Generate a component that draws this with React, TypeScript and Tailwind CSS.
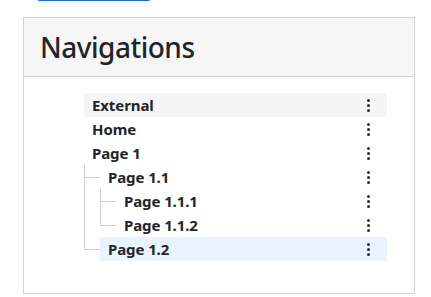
import React from "react";

type Node = { label: string; children?: Node[]; bg?: string };

const tree: Node[] = [
  { label: "External", bg: "bg-[#f5f5f5]" },
  { label: "Home" },
  {
    label: "Page 1",
    children: [
      {
        label: "Page 1.1",
        children: [{ label: "Page 1.1.1" }, { label: "Page 1.1.2" }],
      },
      { label: "Page 1.2", bg: "bg-[#e9f3fd]" },
    ],
  },
];

function Kebab() {
  return (
    <svg width="3" height="13" viewBox="0 0 3 13" className="block">
      <circle cx="1.5" cy="1.5" r="1.5" fill="#2b2b2b" />
      <circle cx="1.5" cy="6.5" r="1.5" fill="#2b2b2b" />
      <circle cx="1.5" cy="11.5" r="1.5" fill="#2b2b2b" />
    </svg>
  );
}

function Row({ node }: { node: Node }) {
  return (
    <div className={`flex h-6 items-center justify-between pl-2 pr-[17px] ${node.bg ?? ""}`}>
      <span className="text-[15px] font-bold leading-none tracking-[-0.1px] text-[#212529]">{node.label}</span>
      <Kebab />
    </div>
  );
}

function Children({ nodes }: { nodes: Node[] }) {
  return (
    <div className="flex flex-col">
      {nodes.map((n, i) => {
        const last = i === nodes.length - 1;
        return (
          <div key={n.label} className="relative pl-4">
            <div
              className={`absolute left-0 top-0 w-px bg-[#cfcfcf] ${last ? "h-3" : "h-full"}`}
            />
            <div className="absolute left-0 top-3 h-px w-4 bg-[#cfcfcf]" />
            <Row node={n} />
            {n.children && <Children nodes={n.children} />}
          </div>
        );
      })}
    </div>
  );
}

export default function App() {
  return (
    <div
      className="relative h-[297px] w-[431px] overflow-hidden bg-white"
      style={{ fontFamily: '"Noto Sans", "Open Sans", sans-serif' }}
    >
      <div className="ml-[38px] h-px w-[112px] rounded-b bg-[#0d6efd]" />
      <div className="ml-[23px] mt-4 flex h-[277px] w-[392px] flex-col border border-[#d2d2d2]">
        <div className="flex h-[59px] items-center border-b border-[#d2d2d2] bg-[#f6f6f6] px-4">
          <h1 className="text-[28px] font-medium leading-none tracking-[-0.5px] text-[#212529]">Navigations</h1>
        </div>
        <div className="pl-[60px] pr-[27px] pt-4">
          <div className="flex flex-col">
            {tree.map((n) => (
              <div key={n.label}>
                <Row node={n} />
                {n.children && <Children nodes={n.children} />}
              </div>
            ))}
          </div>
        </div>
      </div>
    </div>
  );
}
